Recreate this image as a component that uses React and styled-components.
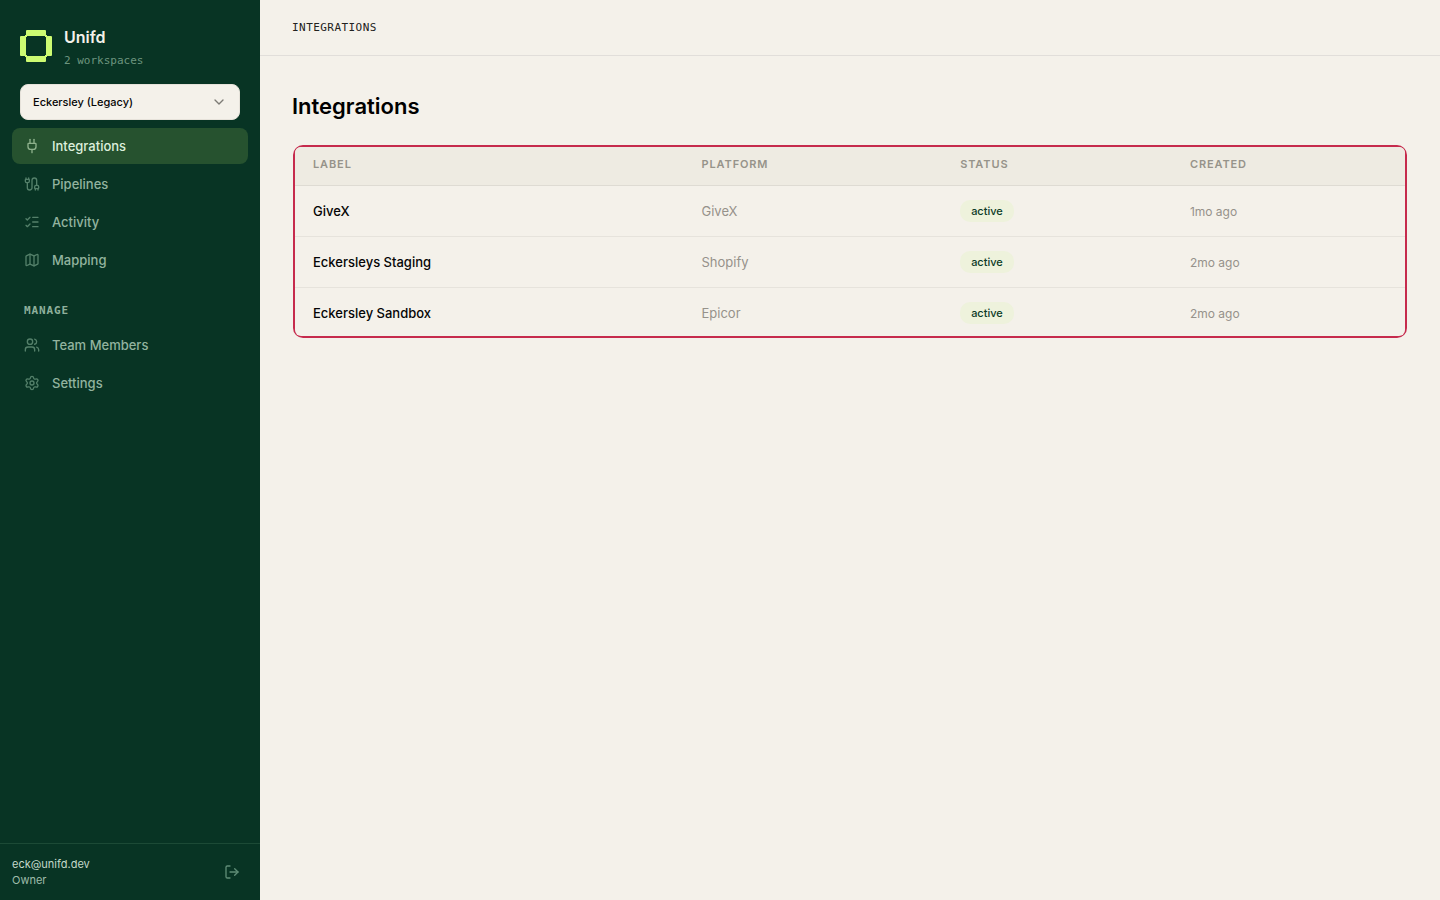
import React from "react";
import styled, { createGlobalStyle } from "styled-components";
import { Plug, Cable, ListChecks, Map, Users, Settings, LogOut, ChevronDown } from "lucide-react";

const sans = `Inter, "Liberation Sans", sans-serif`;
const mono = `"DejaVu Sans Mono", "Liberation Mono", monospace`;

const GlobalStyle = createGlobalStyle`
  *, *::before, *::after { box-sizing: border-box; }
  body { margin: 0; background: #f4f1ea; color: #050505; font-family: ${sans}; }
`;

const Shell = styled.div`
  display: grid;
  grid-template-columns: 260px minmax(0, 1fr);
  min-height: 100vh;
`;

const Sidebar = styled.aside`
  display: flex;
  flex-direction: column;
  background: #083424;
`;

const Brand = styled.div`
  display: flex;
  align-items: flex-start;
  gap: 12px;
  padding: 24px 20px 12px;
  svg { margin-top: 6px; }
`;

const BrandName = styled.div`
  color: #f4f1ea;
  font-size: 16px;
  font-weight: 600;
  line-height: 26px;
`;

const BrandMeta = styled.div`
  color: #6d957f;
  font-family: ${mono};
  font-size: 11px;
  line-height: 22px;
`;

const WorkspacePicker = styled.label`
  display: grid;
  align-items: center;
  margin: 0 20px 8px;
  > * { grid-area: 1 / 1; }
  svg { justify-self: end; margin-right: 13px; color: #7d7b76; pointer-events: none; }
`;

const Select = styled.select`
  appearance: none;
  width: 100%;
  height: 36px;
  padding: 0 36px 0 12px;
  border: 1px solid #e6e2da;
  border-radius: 8px;
  background: #f4f1ea;
  color: #050505;
  font-family: ${sans};
  font-size: 11px;
  font-weight: 500;
`;

const Nav = styled.nav`
  display: flex;
  flex-direction: column;
  gap: 2px;
  padding: 0 12px;
`;

const NavLink = styled.a`
  display: flex;
  align-items: center;
  gap: 12px;
  height: 36px;
  padding: 0 12px;
  border-radius: 8px;
  background: ${(p) => (p.$active ? "#26522f" : "transparent")};
  color: ${(p) => (p.$active ? "#dcefdc" : "#92b39f")};
  font-size: 13px;
  font-weight: 500;
  text-decoration: none;
  svg { color: ${(p) => (p.$active ? "#8fb28d" : "#54806a")}; }
`;

const NavHeading = styled.h2`
  margin: 23px 0 6px;
  padding: 0 12px;
  color: #8fb09c;
  font-family: ${mono};
  font-size: 11px;
  font-weight: 700;
  line-height: 16px;
  letter-spacing: 0.08em;
`;

const Account = styled.footer`
  display: flex;
  align-items: center;
  justify-content: space-between;
  margin-top: auto;
  padding: 12px;
  border-top: 1px solid #1c4a36;
`;

const AccountText = styled.div`
  color: ${(p) => (p.$muted ? "#9fbcaa" : "#c3d8c9")};
  font-size: 11px;
  line-height: 16px;
`;

const IconButton = styled.button`
  display: flex;
  padding: 8px;
  border: 0;
  background: none;
  color: #5f8c76;
`;

const TopBar = styled.header`
  display: flex;
  align-items: center;
  height: 56px;
  padding: 0 32px;
  border-bottom: 1px solid #e1deda;
  color: #222220;
  font-family: ${mono};
  font-size: 11px;
  letter-spacing: 0.04em;
`;

const Content = styled.main`
  padding: 32px;
`;

const Title = styled.h1`
  margin: 0 0 20px;
  color: #000;
  font-size: 22px;
  font-weight: 600;
  line-height: 36px;
`;

const TableFrame = styled.div`
  margin: 21px 1px 0;
  padding: 2px;
  border-radius: 10px;
  background: #c62b4d;
`;

const TableClip = styled.div`
  border-radius: 6px;
  background: #f4f1ea;
  overflow: hidden;
`;

const Table = styled.table`
  width: 100%;
  border-collapse: separate;
  border-spacing: 0;
  table-layout: fixed;
`;

const HeadCell = styled.th`
  width: ${(p) => p.$width};
  height: 39px;
  padding: 0 18px 4px;
  border-bottom: 1px solid #dedbd3;
  background: #eeebe2;
  color: #96938a;
  font-size: 11px;
  font-weight: 600;
  letter-spacing: 0.08em;
  text-align: left;
`;

const Cell = styled.td`
  height: 51px;
  padding: 0 18px;
  border-bottom: 1px solid #e6e3dc;
  color: ${(p) => (p.$strong ? "#050505" : "#96928b")};
  font-size: ${(p) => (p.$small ? "12px" : "13px")};
  font-weight: ${(p) => (p.$strong ? 500 : 400)};
  tr:last-child > & { height: 48px; padding-top: 2px; border-bottom: 0; }
`;

const Badge = styled.span`
  display: inline-block;
  padding: 0 11px;
  border-radius: 10px;
  background: #eef2dc;
  color: #0c3b27;
  font-size: 11px;
  font-weight: 500;
  line-height: 22px;
  vertical-align: middle;
`;

const Logo = () => (
  <svg width="32" height="32" viewBox="0 0 32 32" fill="#cdfb72" aria-hidden="true">
    <rect x="6" y="0" width="20" height="6" rx="1" />
    <rect x="6" y="26" width="20" height="6" rx="1" />
    <rect x="0" y="6" width="6" height="20" rx="1" />
    <rect x="26" y="6" width="6" height="20" rx="1" />
    <path d="M5 5h2v2H5zM25 5h2v2h-2zM5 25h2v2H5zM25 25h2v2h-2z" />
  </svg>
);

const mainLinks = [
  ["Integrations", Plug],
  ["Pipelines", Cable],
  ["Activity", ListChecks],
  ["Mapping", Map],
];
const manageLinks = [
  ["Team Members", Users],
  ["Settings", Settings],
];
const columns = [
  ["LABEL", "35%"],
  ["PLATFORM", "23.3%"],
  ["STATUS", "20.7%"],
  ["CREATED", "21%"],
];
const rows = [
  ["GiveX", "GiveX", "active", "1mo ago"],
  ["Eckersleys Staging", "Shopify", "active", "2mo ago"],
  ["Eckersley Sandbox", "Epicor", "active", "2mo ago"],
];

const NavItem = ({ label, icon: Icon, active }) => (
  <NavLink href="#" $active={active} aria-current={active ? "page" : undefined}>
    <Icon size={16} strokeWidth={2} />
    {label}
  </NavLink>
);

export default function App() {
  return (
    <>
      <GlobalStyle />
      <Shell>
        <Sidebar>
          <Brand>
            <Logo />
            <div>
              <BrandName>Unifd</BrandName>
              <BrandMeta>2 workspaces</BrandMeta>
            </div>
          </Brand>
          <WorkspacePicker>
            <Select aria-label="Workspace">
              <option>Eckersley (Legacy)</option>
            </Select>
            <ChevronDown size={16} strokeWidth={2} />
          </WorkspacePicker>
          <Nav>
            {mainLinks.map(([label, icon], i) => (
              <NavItem key={label} label={label} icon={icon} active={i === 0} />
            ))}
            <NavHeading>MANAGE</NavHeading>
            {manageLinks.map(([label, icon]) => (
              <NavItem key={label} label={label} icon={icon} />
            ))}
          </Nav>
          <Account>
            <div>
              <AccountText>eck@unifd.dev</AccountText>
              <AccountText $muted>Owner</AccountText>
            </div>
            <IconButton aria-label="Log out">
              <LogOut size={16} strokeWidth={2} />
            </IconButton>
          </Account>
        </Sidebar>
        <div>
          <TopBar>INTEGRATIONS</TopBar>
          <Content>
            <Title>Integrations</Title>
            <TableFrame>
              <TableClip>
                <Table>
                  <thead>
                    <tr>
                      {columns.map(([name, width]) => (
                        <HeadCell key={name} $width={width}>{name}</HeadCell>
                      ))}
                    </tr>
                  </thead>
                  <tbody>
                    {rows.map(([label, platform, status, created]) => (
                      <tr key={label}>
                        <Cell $strong>{label}</Cell>
                        <Cell>{platform}</Cell>
                        <Cell><Badge>{status}</Badge></Cell>
                        <Cell $small>{created}</Cell>
                      </tr>
                    ))}
                  </tbody>
                </Table>
              </TableClip>
            </TableFrame>
          </Content>
        </div>
      </Shell>
    </>
  );
}
